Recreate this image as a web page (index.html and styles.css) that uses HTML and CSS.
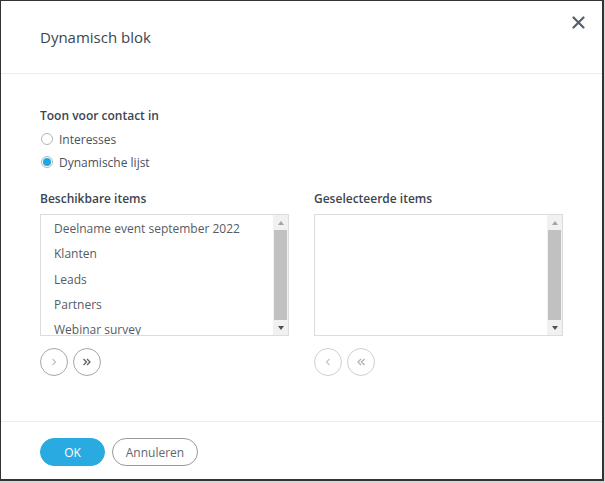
FILE: index.html
```html
<!DOCTYPE html>
<html>
<head>
<meta charset="utf-8">
<link rel="stylesheet" href="styles.css">
</head>
<body>
<div class="frame">
  <div class="header">
    <div class="title">Dynamisch blok</div>
    <div class="close">
      <svg width="13" height="13" viewBox="0 0 13 13"><path d="M1.5 1.5 L11.5 11.5 M11.5 1.5 L1.5 11.5" stroke="#56606b" stroke-width="2.2" stroke-linecap="round"/></svg>
    </div>
  </div>
  <div class="content">
    <div class="label">Toon voor contact in</div>
    <div class="radio-row"><span class="radio"></span><span class="radio-text">Interesses</span></div>
    <div class="radio-row"><span class="radio checked"></span><span class="radio-text">Dynamische lijst</span></div>
    <div class="columns">
      <div class="col">
        <div class="label">Beschikbare items</div>
        <div class="listbox">
          <div class="items">
            <div class="item">Deelname event september 2022</div>
            <div class="item">Klanten</div>
            <div class="item">Leads</div>
            <div class="item">Partners</div>
            <div class="item">Webinar survey</div>
          </div>
          <div class="scrollbar">
            <div class="arrow up"></div>
            <div class="thumb"></div>
            <div class="arrow down"></div>
          </div>
        </div>
        <div class="movers">
          <div class="circle">
            <svg width="10" height="10" viewBox="0 0 10 10"><path d="M3.5 2 L6.5 5 L3.5 8" fill="none" stroke="#c4c4c4" stroke-width="1.3"/></svg>
          </div>
          <div class="circle">
            <svg width="12" height="10" viewBox="0 0 12 10"><path d="M2.5 2 L5.5 5 L2.5 8 M6 2 L9 5 L6 8" fill="none" stroke="#5a5f66" stroke-width="1.3"/></svg>
          </div>
        </div>
      </div>
      <div class="col">
        <div class="label">Geselecteerde items</div>
        <div class="listbox">
          <div class="items"></div>
          <div class="scrollbar">
            <div class="arrow up"></div>
            <div class="thumb"></div>
            <div class="arrow down"></div>
          </div>
        </div>
        <div class="movers">
          <div class="circle disabled">
            <svg width="10" height="10" viewBox="0 0 10 10"><path d="M6.5 2 L3.5 5 L6.5 8" fill="none" stroke="#c8c8c8" stroke-width="1.3"/></svg>
          </div>
          <div class="circle disabled">
            <svg width="12" height="10" viewBox="0 0 12 10"><path d="M6 2 L3 5 L6 8 M9.5 2 L6.5 5 L9.5 8" fill="none" stroke="#b0b0b0" stroke-width="1.3"/></svg>
          </div>
        </div>
      </div>
    </div>
  </div>
  <div class="footer">
    <button class="btn primary">OK</button>
    <button class="btn secondary">Annuleren</button>
  </div>
</div>
</body>
</html>
```

FILE: styles.css
```css
* { box-sizing: border-box; }
html, body { margin: 0; padding: 0; }
body {
  background: #d6d6d6;
  font-family: "Open Sans", "Liberation Sans", sans-serif;
  width: 605px;
  height: 483px;
}
.frame {
  width: 604px;
  height: 481px;
  background: #fff;
  border-style: solid;
  border-color: #333;
  border-width: 1px 2px 2px 1px;
  display: flex;
  flex-direction: column;
}
.header {
  height: 73px;
  border-bottom: 1px solid #ececec;
  display: flex;
  padding: 0 17px 0 39px;
}
.title {
  flex: 1;
  align-self: center;
  font-size: 15px;
  color: #3c4550;
}
.close {
  margin-top: 15px;
  width: 13px;
  height: 13px;
  display: flex;
}
.content {
  flex: 1;
  padding: 33px 39px 0 39px;
}
.label {
  font-size: 12px;
  font-weight: 600;
  color: #3c4550;
  line-height: 18px;
}
.radio-row {
  display: flex;
  align-items: center;
  padding-top: 5px;
  box-sizing: content-box;
  height: 18px;
}
.radio {
  width: 12px;
  height: 12px;
  border-radius: 50%;
  border: 1px solid #b5b5b5;
  margin-left: 1px;
  display: flex;
  align-items: center;
  justify-content: center;
}
.radio.checked::after {
  content: "";
  width: 8px;
  height: 8px;
  border-radius: 50%;
  background: #1ea7e4;
}
.radio-text {
  font-size: 12px;
  color: #4a525c;
  margin-left: 6px;
}
.columns {
  display: flex;
  gap: 25px;
  margin-top: 19px;
}
.col {
  width: 251px;
  display: flex;
  flex-direction: column;
}
.listbox {
  margin-top: 6px;
  height: 122px;
  border: 1px solid #dcdcdc;
  display: flex;
  overflow: hidden;
}
.items {
  flex: 1;
  padding-top: 1px;
  overflow: hidden;
}
.item {
  height: 25.3px;
  line-height: 25.3px;
  padding-left: 13px;
  font-size: 12px;
  color: #555c64;
  white-space: nowrap;
}
.scrollbar {
  width: 15px;
  background: #f1f1f1;
  display: flex;
  flex-direction: column;
  align-items: center;
}
.arrow {
  height: 15px;
  width: 15px;
  display: flex;
  align-items: center;
  justify-content: center;
}
.arrow::after {
  content: "";
  width: 0;
  height: 0;
  border-left: 3.5px solid transparent;
  border-right: 3.5px solid transparent;
}
.arrow.up::after { border-bottom: 4px solid #a3a3a3; }
.arrow.down::after { border-top: 4px solid #505050; }
.thumb {
  flex: 1;
  width: 13px;
  background: #c1c1c1;
}
.movers {
  display: flex;
  gap: 5px;
  margin-top: 12px;
}
.circle {
  width: 28px;
  height: 28px;
  border-radius: 50%;
  border: 1px solid #a6a6a6;
  display: flex;
  align-items: center;
  justify-content: center;
}
.circle.disabled { border-color: #cfcfcf; }
.footer {
  border-top: 1px solid #ececec;
  padding: 16px 39px 0 39px;
  height: 58px;
  display: flex;
  gap: 7px;
  align-items: flex-start;
}
.btn {
  height: 28px;
  border-radius: 14px;
  font-family: "Open Sans", "Liberation Sans", sans-serif;
  font-size: 12px;
  padding: 0;
  cursor: pointer;
}
.primary {
  width: 65px;
  background: #29abe2;
  border: 1px solid #29abe2;
  color: #fff;
}
.secondary {
  width: 86px;
  background: #fff;
  border: 1px solid #9a9a9a;
  color: #5f6770;
}
```
